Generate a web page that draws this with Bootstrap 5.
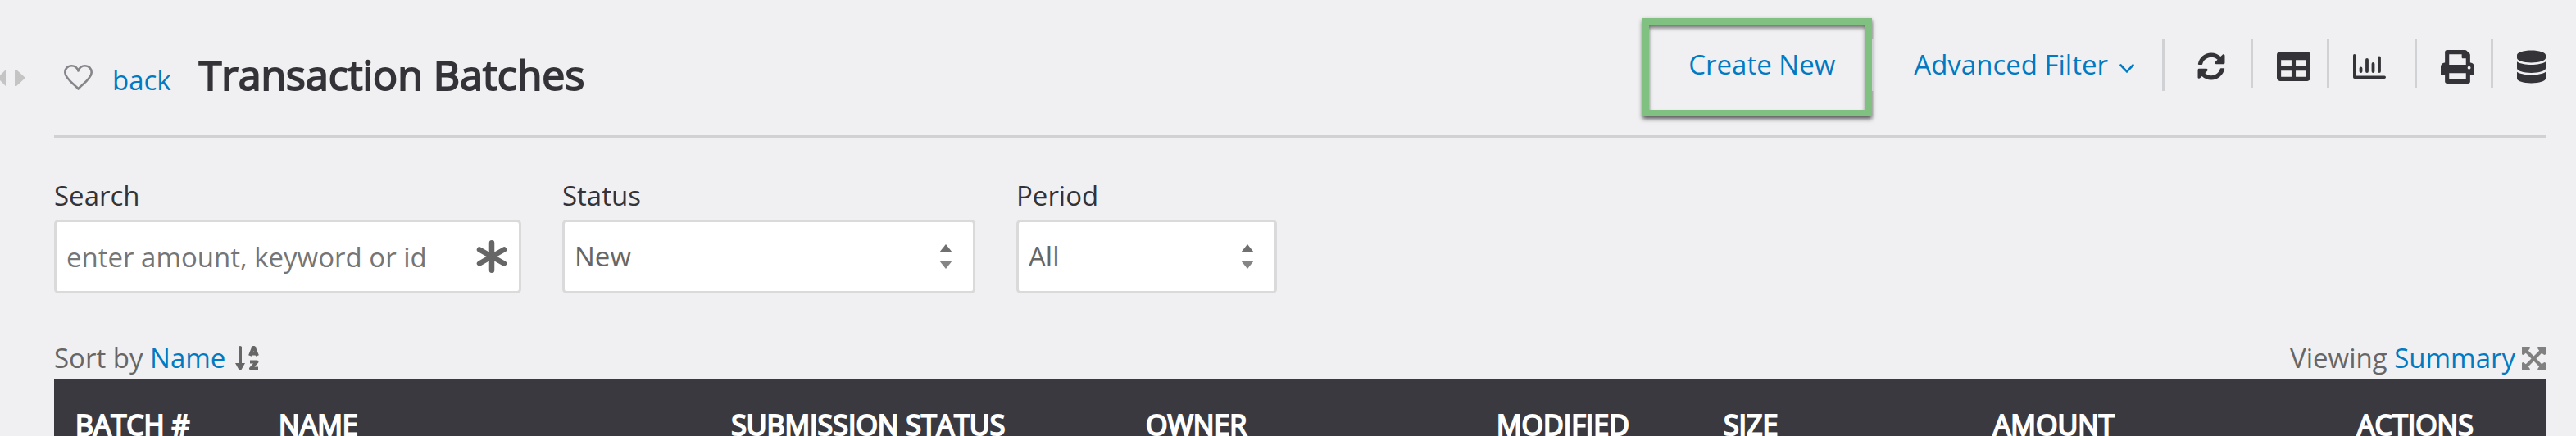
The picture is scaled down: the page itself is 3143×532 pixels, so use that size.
<!DOCTYPE html>
<html lang="en">
<head>
<meta charset="utf-8">
<meta name="viewport" content="width=device-width, initial-scale=1">
<title>Transaction Batches</title>
<link href="https://cdn.jsdelivr.net/npm/bootstrap@5.3.0/dist/css/bootstrap.min.css" rel="stylesheet">
<style>
  :root { --ink: #343338; --muted-ink: #666; --link: #007ac2; --rule: #d0d1d4; --head: #3b3940; }
  body { background: #f0f0f2; color: var(--ink); font-family: "Open Sans", sans-serif; font-size: 33px; line-height: 46px; }
  a, .tool-btn { color: var(--link); text-decoration: none; }
  svg { display: block; flex: none; }
  .page { padding: 22px 37px 0 66px; }
  .page-head { height: 146px; border-bottom: 3px solid var(--rule); }
  .side-toggle { left: 0; top: 85px; }
  .back-group { padding-top: 35px; }
  .heart { margin: 1px 24px 0 12px; }
  .title { font-size: 50px; line-height: 68px; margin: 0 0 0 34px; -webkit-text-stroke: 2px var(--ink); }
  .highlight { width: 280px; height: 120px; border: 8px solid #80c080; padding: 26px 0 0 48px;
    box-shadow: 0 3px 5px rgba(0,0,0,.65), inset 0 4px 5px rgba(0,0,0,.55); }
  .tool-item { height: 60px; margin-top: 25px; border-right: 3px solid var(--rule); padding-left: 29px; }
  .tool-item.tall { height: 64px; }
  .tool-item:last-child { border-right: 0; }
  .tool-item.gap-s { padding-right: 20px; }
  .tool-item.gap-l { padding-right: 35px; }
  .tool-item.even { padding: 0 31px 0 40px; }
  .tool-item.filter { padding: 9px 34px 0 48px; }
  .tool-btn { background: none; border: 0; padding: 0; }
  .chevron { margin: 8px 0 0 14px; }
  .icon-btn { color: var(--ink); height: 68px; display: flex; align-items: center; }
  .filters { padding-top: 48px; }
  .field { margin-right: 50px; }
  .field label { display: block; margin-bottom: 6px; }
  .field .form-control, .field .form-select { height: 90px; border: 3px solid #dadada; border-radius: 5px;
    padding: 0 12px; font-size: 33px; line-height: 46px; color: var(--muted-ink); background-color: #fff; }
  .form-control::placeholder { color: #757575; }
  .field .form-select { background-position: right 24px center; background-size: 18px 32px;
    background-image: url("data:image/svg+xml,%3Csvg xmlns='http://www.w3.org/2000/svg' viewBox='0 0 18 32'%3E%3Cpath fill='%23707070' d='M9 1l8 10H1z'/%3E%3Cpath fill='%23858585' d='M9 31l8-10H1z'/%3E%3C/svg%3E"); }
  .w-search { width: 570px; } .w-status { width: 504px; } .w-period { width: 318px; }
  .star { right: 17px; bottom: 25px; color: #666; }
  .list-bar { padding: 56px 0 3px; color: var(--muted-ink); }
  .sort-icon { margin-left: 12px; }
  .batches { table-layout: fixed; --bs-table-bg: var(--head); --bs-table-color: #fff; border: 0; }
  .batches th { font-size: 34px; font-weight: 400; padding: 32px 0 32px 26px; border: 0; -webkit-text-stroke: 2px #fff; white-space: nowrap; }
  .c1 { width: 8.16%; } .c2 { width: 18.16%; } .c3 { width: 16.64%; } .c4 { width: 14.08%; }
  .c5 { width: 9.11%; } .c6 { width: 10.82%; } .c7 { width: 14.61%; }
</style>
<script src="https://cdn.jsdelivr.net/npm/bootstrap@5.3.0/dist/js/bootstrap.bundle.min.js"></script>
</head>
<body>
<main class="page vh-100 overflow-hidden position-relative">
  <button class="side-toggle tool-btn position-absolute" type="button" aria-label="Resize side panel">
    <svg width="31" height="20" viewBox="0 0 31 20" fill="#c4c4c4"><path d="M7 0v20L0 13V7zM18 0h2l11 10-11 10h-2z"/></svg>
  </button>
  <header class="page-head d-flex justify-content-between">
    <div class="back-group d-flex align-items-start">
      <div class="d-flex align-items-baseline">
        <button class="tool-btn heart" type="button" aria-label="Favourite">
          <svg width="35" height="31" viewBox="0 0 35 31" fill="none" stroke="#85858a" stroke-width="2.6" stroke-linejoin="round"><path d="M17.5 29.5C14 25 1.300 17 1.300 9.500C1.300 4.500 4.800 1.300 9.200 1.300C13 1.300 16.200 3.800 17.500 7.500C18.800 3.800 22 1.300 25.800 1.300C30.200 1.300 33.700 4.500 33.700 9.500C33.700 17 21 25 17.500 29.500Z"/></svg>
        </button>
        <a href="#">back</a>
        <h1 class="title fw-normal">Transaction Batches</h1>
      </div>
    </div>
    <div class="d-flex align-items-start">
      <div class="highlight"><a href="#">Create New</a></div>
      <div class="tool-item tall ps-0"></div>
      <div class="tool-item tall filter">
        <button class="tool-btn d-flex align-items-center" type="button">Advanced Filter
          <svg class="chevron" width="18" height="11" viewBox="0 0 18 11" fill="none" stroke="currentColor" stroke-width="2.600" stroke-linecap="round"><path d="M1.500 1.500L9 9.300l7.500-7.800"/></svg>
        </button>
      </div>
      <div class="tool-item even">
        <button class="tool-btn icon-btn" type="button" aria-label="Refresh">
          <svg width="34" height="34" viewBox="0 0 512 512" fill="currentColor"><path d="M370.720 133.280C339.458 104.008 298.888 87.962 255.848 88c-77.458.068-144.328 53.178-162.791 126.850-1.344 5.363-6.122 9.150-11.651 9.150H24.103c-7.498 0-13.194-6.807-11.807-14.176C33.933 94.924 134.813 8 256 8c66.448 0 126.791 26.136 171.315 68.685L463.030 40.970C478.149 25.851 504 36.559 504 57.941V192c0 13.255-10.745 24-24 24H345.941c-21.382 0-32.090-25.851-16.971-40.971l41.750-41.749zM32 296h134.059c21.382 0 32.090 25.851 16.971 40.971l-41.750 41.750c31.262 29.273 71.835 45.319 114.876 45.280 77.418-.070 144.315-53.144 162.787-126.849 1.344-5.363 6.122-9.150 11.651-9.150h57.304c7.498 0 13.194 6.807 11.807 14.176C478.067 417.076 377.187 504 256 504c-66.448 0-126.791-26.136-171.315-68.685L48.970 471.030C33.851 486.149 8 475.441 8 454.059V320c0-13.255 10.745-24 24-24z"/></svg>
        </button>
      </div>
      <div class="tool-item gap-s">
        <button class="tool-btn icon-btn" type="button" aria-label="Table view">
          <svg width="41" height="36" viewBox="0 32 512 448" fill="currentColor"><path d="M464 32H48C21.490 32 0 53.490 0 80v352c0 26.510 21.490 48 48 48h416c26.510 0 48-21.490 48-48V80c0-26.510-21.490-48-48-48zM224 416H64v-96h160v96zm0-160H64v-96h160v96zm224 160H288v-96h160v96zm0-160H288v-96h160v96z"/></svg>
        </button>
      </div>
      <div class="tool-item gap-l">
        <button class="tool-btn icon-btn" type="button" aria-label="Chart view">
          <svg width="40" height="30" viewBox="0 0 40 30" fill="none" stroke="currentColor" stroke-linecap="round" stroke-linejoin="round"><path stroke-width="3.400" d="M1.700 1.700v26.600h36.600"/><path stroke-width="3.800" d="M9.500 17.500V21M17 7v14M24.500 12v9M32 4.500V21"/></svg>
        </button>
      </div>
      <div class="tool-item gap-s">
        <button class="tool-btn icon-btn" type="button" aria-label="Print">
          <svg width="41" height="41" viewBox="0 0 512 512" fill="currentColor"><path d="M448 192V77.250c0-8.490-3.370-16.620-9.370-22.630L393.370 9.370c-6-6-14.140-9.370-22.630-9.370H96C78.330 0 64 14.330 64 32v160c-35.350 0-64 28.650-64 64v112c0 8.840 7.160 16 16 16h48v96c0 17.670 14.330 32 32 32h320c17.670 0 32-14.330 32-32v-96h48c8.840 0 16-7.160 16-16V256c0-35.350-28.650-64-64-64zm-64 256H128v-96h256v96zm0-224H128V64h192v48c0 8.840 7.160 16 16 16h48v96zm48 72c-13.250 0-24-10.750-24-24 0-13.260 10.750-24 24-24s24 10.740 24 24c0 13.250-10.750 24-24 24z"/></svg>
        </button>
      </div>
      <div class="tool-item">
        <button class="tool-btn icon-btn" type="button" aria-label="Data">
          <svg width="35" height="41" viewBox="0 0 448 512" fill="currentColor"><path d="M448 73.143v45.714C448 159.143 347.667 192 224 192S0 159.143 0 118.857V73.143C0 32.857 100.333 0 224 0s224 32.857 224 73.143zM448 176v102.857C448 319.143 347.667 352 224 352S0 319.143 0 278.857V176c48.125 33.143 136.208 48.572 224 48.572S399.874 209.143 448 176zm0 160v102.857C448 479.143 347.667 512 224 512S0 479.143 0 438.857V336c48.125 33.143 136.208 48.572 224 48.572S399.874 369.143 448 336z"/></svg>
        </button>
      </div>
    </div>
  </header>

  <form class="filters d-flex">
    <div class="field w-search position-relative">
      <label for="search">Search</label>
      <input class="form-control" id="search" type="text" placeholder="enter amount, keyword or id">
      <svg class="star position-absolute" width="38" height="40" viewBox="0 0 38 40" stroke="currentColor" stroke-width="6.500" stroke-linecap="round"><path d="M19 3.300v33.400M4 11.500l30 17M34 11.500l-30 17"/></svg>
    </div>
    <div class="field w-status">
      <label for="status">Status</label>
      <select class="form-select" id="status"><option>New</option></select>
    </div>
    <div class="field w-period">
      <label for="period">Period</label>
      <select class="form-select" id="period"><option>All</option></select>
    </div>
  </form>

  <div class="list-bar d-flex justify-content-between">
    <div class="d-flex align-items-center">
      <span>Sort by <a href="#">Name</a></span>
      <svg class="sort-icon" width="30" height="30" viewBox="0 0 30 30" fill="none" stroke="#666"><path stroke-width="4" stroke-linecap="round" d="M6 2v23"/><path fill="#666" stroke="none" d="M0 21h12L7.500 29q-1.500 1.500-3 0z"/><path stroke-width="4" stroke-linejoin="round" d="M18 12L22 2h1L27 12M19 9.500h7M18 19.500h8.500L19 27.500H28"/></svg>
    </div>
    <div class="d-flex align-items-center">
      <span>Viewing <a href="#">Summary</a></span>
      <svg class="ms-2" width="29" height="29" viewBox="0 0 29 29" fill="#808080"><path d="M1.500 0H9q1.500 1 .5 2.500L7.800 4.800l6.700 6.700 6.700-6.700L19.500 2.500Q18.500 1 20 0h7.500Q29 0 29 1.500V9q-1 1.500-2.500.500l-2.300-1.700-6.700 6.700 6.700 6.700 2.300-1.700Q28 18.500 29 20v7.500q0 1.500-1.500 1.500H20q-1.500-1-.5-2.500l1.700-2.300-6.700-6.700-6.700 6.700 1.700 2.300Q10.500 28 9 29H1.500Q0 29 0 27.500V20q1-1.500 2.500-.5l2.300 1.700 6.700-6.700-6.700-6.700L2.500 9.500Q1 10.500 0 9V1.500Q0 0 1.500 0z"/></svg>
    </div>
  </div>

  <table class="table batches mb-0">
    <thead>
      <tr>
        <th class="c1" scope="col">BATCH #</th>
        <th class="c2" scope="col">NAME</th>
        <th class="c3" scope="col">SUBMISSION STATUS</th>
        <th class="c4" scope="col">OWNER</th>
        <th class="c5" scope="col">MODIFIED</th>
        <th class="c6" scope="col">SIZE</th>
        <th class="c7" scope="col">AMOUNT</th>
        <th scope="col">ACTIONS</th>
      </tr>
    </thead>
  </table>
</main>
</body>
</html>
